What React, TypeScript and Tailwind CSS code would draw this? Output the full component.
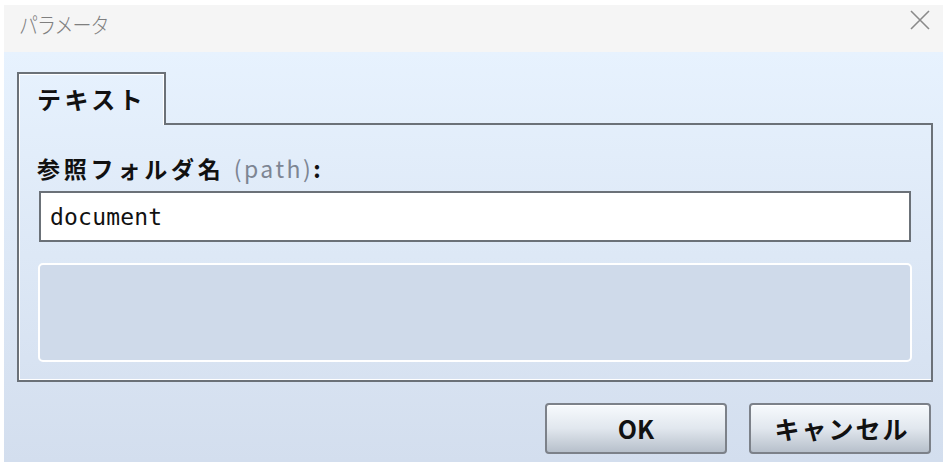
import { useState } from 'react'

const jp = "font-['Noto_Sans_CJK_JP','Noto_Sans',sans-serif]"

export default function App() {
  const [path, setPath] = useState('document')

  return (
    <div className={`w-[946px] h-[465px] bg-white pt-[5px] pl-[4px] pr-[3px] pb-[3px] ${jp}`}>
      <div className="flex flex-col h-full">
        {/* title bar */}
        <div className="h-[47px] bg-[#f5f5f5] flex items-start justify-between pl-[15px] pr-[12px] pt-[3px]">
          <span className="text-[19px] font-light text-[#7f7f7f] tracking-[-1px] scale-y-115 origin-top">パラメータ</span>
          <svg width="22" height="22" viewBox="0 0 22 22" className="mt-[1px]">
            <path d="M2 2 L20 20 M20 2 L2 20" stroke="#8a8a8a" strokeWidth="1.6" />
          </svg>
        </div>

        {/* body */}
        <div className="flex-1 bg-gradient-to-b from-[#e7f2fe] to-[#d3deee] pt-[20px] pl-[13px] pr-[10px] flex flex-col">
          <div className="w-[916px] flex flex-col">
            <div className="flex h-[53px]">
              <div className="w-[149px] border-t-2 border-l-2 border-r-2 border-[#6b7178] shadow-[inset_1px_1px_0_#ffffff,inset_-1px_0_0_#ffffff] flex items-center pl-[18px]">
                <span className="text-[24px] font-bold text-[#111] tracking-[3.5px] -mt-[2px]">テキスト</span>
              </div>
              <div className="flex-1 border-b-2 border-[#6b7178]" />
            </div>
            <div className="h-[257px] border-l-2 border-r-2 border-b-2 border-[#6b7178] shadow-[inset_1px_0_0_#ffffff,inset_0_-1px_0_#ffffff] pl-[20px] pr-[20px] pt-[28px] flex flex-col">
              <div className="text-[23px] font-bold text-[#111] leading-[30px] tracking-[3.8px] -ml-[2px]">
                参照フォルダ名 <span className="font-normal text-[#7d8593] tracking-[2.5px]">(path)</span>:
              </div>
              <input
                value={path}
                onChange={(e) => setPath(e.target.value)}
                className="mt-[8px] h-[51px] border-2 border-[#6b7178] bg-white px-[9px] text-[23px] text-[#111] font-['DejaVu_Sans_Mono',monospace] tracking-[0.2px] outline-none"
              />
              <div className="mt-[21px] h-[99px] -ml-[1px] -mr-[1px] rounded-[5px] border-2 border-white bg-[#cfdaea]" />
            </div>
          </div>

          <div className="flex justify-end gap-[22px] mt-[21px] pr-[2px]">
            <button className="w-[182px] h-[51px] rounded-[4px] border-2 border-[#7c8189] bg-gradient-to-b from-[#f7fafd] via-[#e1e7ee] to-[#b7c0cb] shadow-[inset_0_1px_0_#ffffff] text-[25px] font-bold text-[#111]">
              OK
            </button>
            <button className="w-[182px] h-[51px] rounded-[4px] border-2 border-[#7c8189] bg-gradient-to-b from-[#f7fafd] via-[#e1e7ee] to-[#b7c0cb] shadow-[inset_0_1px_0_#ffffff] text-[25px] font-bold text-[#111] tracking-[2px] pl-[4px]">
              キャンセル
            </button>
          </div>
        </div>
      </div>
    </div>
  )
}
